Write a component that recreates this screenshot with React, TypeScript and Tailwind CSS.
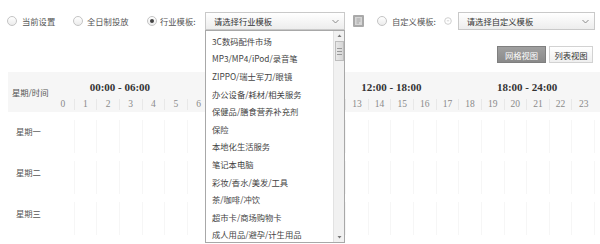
import React from 'react';

const hours = Array.from({ length: 24 }, (_, i) => i);
const days = ['星期一', '星期二', '星期三'];
const industries = [
  '3C数码配件市场',
  'MP3/MP4/iPod/录音笔',
  'ZIPPO/瑞士军刀/眼镜',
  '办公设备/耗材/相关服务',
  '保健品/膳食营养补充剂',
  '保险',
  '本地化生活服务',
  '笔记本电脑',
  '彩妆/香水/美发/工具',
  '茶/咖啡/冲饮',
  '超市卡/商场购物卡',
  '成人用品/避孕/计生用品',
];
const ranges = ['00:00 - 06:00', '06:00 - 12:00', '12:00 - 18:00', '18:00 - 24:00'];

// hours and range covered by the open dropdown
const hiddenHour = (h: number) => h >= 7 && h <= 12;

const Radio: React.FC<{ checked?: boolean }> = ({ checked }) => (
  <span className="w-[10px] h-[10px] shrink-0 rounded-full border border-[#c4c4c4] bg-gradient-to-b from-white to-[#ececec] flex items-center justify-center">
    {checked && <span className="w-[4px] h-[4px] rounded-full bg-[#444]" />}
  </span>
);

const Arrow = () => (
  <svg width="7" height="5" viewBox="0 0 7 5">
    <path d="M0.5 1 L3.5 4 L6.5 1" fill="none" stroke="#8a8a8a" strokeWidth="1" />
  </svg>
);

const Select: React.FC<{ label: string; width: string }> = ({ label, width }) => (
  <div className={`${width} h-[18px] shrink-0 border border-[#c9c9c9] bg-gradient-to-b from-white to-[#ededed] flex items-center justify-between pl-[8px] pr-[5px] text-[#333]`}>
    <span>{label}</span>
    <Arrow />
  </div>
);

export default function App() {
  return (
    <div className="relative w-[600px] h-[244px] overflow-hidden bg-white text-[#555] text-[8.3px] leading-[12px] font-['Noto_Sans_CJK_SC',sans-serif]">
      {/* filter bar */}
      <div className="h-[41px] pt-[12px] flex items-start">
        <div className="h-[18px] flex items-center w-[73px] pl-[7px] gap-[5px]">
          <Radio />
          <span>当前设置</span>
        </div>
        <div className="h-[18px] flex items-center w-[74px] gap-[4px]">
          <Radio />
          <span>全日制投放</span>
        </div>
        <div className="h-[18px] flex items-center w-[58px] gap-[3px]">
          <Radio checked />
          <span>行业模板:</span>
        </div>
        <Select label="请选择行业模板" width="w-[140px]" />
        <div className="h-[18px] flex items-center ml-[8px]">
          <svg width="11" height="12" viewBox="0 0 11 12">
            <rect x="0" y="0" width="11" height="12" rx="1" fill="#a9a9a9" />
            <rect x="2" y="2" width="7" height="8" fill="#d6d6d6" />
            <path d="M3.5 4 H7.5 M3.5 6 H7.5 M3.5 8 H6" stroke="#9a9a9a" strokeWidth="0.8" />
          </svg>
        </div>
        <div className="h-[18px] flex items-center ml-[13px] gap-[5px]">
          <Radio />
          <span>自定义模板:</span>
          <svg width="8" height="8" viewBox="0 0 8 8" className="ml-[3px]">
            <circle cx="4" cy="4" r="3.3" fill="none" stroke="#cfcfcf" strokeWidth="1" />
            <path d="M2.8 3.8 H5.2" stroke="#d4d4d4" strokeWidth="1" />
          </svg>
        </div>
        <div className="ml-[6px]">
          <Select label="请选择自定义模板" width="w-[137px]" />
        </div>
      </div>

      {/* view switch */}
      <div className="h-[31px] flex justify-end items-start pt-[5px] pr-[7px] gap-[3px]">
        <button className="w-[49px] h-[17px] bg-gradient-to-b from-[#a0a0a0] to-[#8a8a8a] border border-[#7f7f7f] text-white text-[8.3px] leading-[12px]">
          网格视图
        </button>
        <button className="w-[44px] h-[17px] bg-gradient-to-b from-white to-[#efefef] border border-[#d2d2d2] text-[#333] text-[8.3px] leading-[12px]">
          列表视图
        </button>
      </div>

      {/* schedule table */}
      <div className="ml-[8px]">
        <div className="h-[40px] bg-[#f6f6f6] flex">
          <div className="w-[44px] pl-[4px] pt-[14px] text-[#555]">星期/时间</div>
          <div className="w-[543px] flex flex-col">
            <div className="h-[24px] grid grid-cols-4 items-end pb-[2px]">
              {ranges.map((r, i) => (
                <div
                  key={r}
                  className={`text-center font-['Liberation_Serif',serif] font-bold text-[11px] leading-[13px] text-[#333] ${i === 1 ? 'invisible' : ''}`}
                >
                  {r}
                </div>
              ))}
            </div>
            <div className="h-[16px] grid grid-cols-[repeat(24,minmax(0,1fr))] items-center">
              {hours.map((h) => (
                <div
                  key={h}
                  className="text-center font-['Liberation_Serif',serif] text-[9.5px] leading-[11px] text-[#8a8a8a] border-r border-[#e8e8e8] last:border-r-0"
                >
                  <span className={hiddenHour(h) ? 'invisible' : ''}>{h}</span>
                </div>
              ))}
            </div>
          </div>
        </div>

        {days.map((d) => (
          <div key={d} className="h-[41px] flex">
            <div className="w-[44px] pl-[8px] pt-[13px] text-[#555]">{d}</div>
            <div className="w-[543px] grid grid-cols-[repeat(24,minmax(0,1fr))]">
              {hours.map((h) => (
                <div key={h} className="mt-[8px] border-r border-[#f6f6f6]" />
              ))}
            </div>
          </div>
        ))}
      </div>

      {/* open industry dropdown */}
      <div className="absolute left-[205px] top-[30px] w-[140px] h-[213px] border border-[#a8a8a8] bg-white flex">
        <ul className="flex-1 pt-[1px]">
          {industries.map((it) => (
            <li key={it} className="h-[17.6px] flex items-center pl-[6px] text-[#444] whitespace-nowrap">
              {it}
            </li>
          ))}
        </ul>
        <div className="w-[11px] bg-[#f1f1f1] border-l border-[#e2e2e2] flex flex-col items-center">
          <svg width="11" height="10" viewBox="0 0 11 10" className="shrink-0">
            <path d="M3.5 6 L5.5 3.5 L7.5 6 Z" fill="#777" />
          </svg>
          <div className="w-[9px] h-[20px] bg-gradient-to-r from-[#e8e8e8] to-[#d6d6d6] border border-[#bdbdbd] flex flex-col items-center justify-center gap-[2px]">
            <span className="w-[5px] h-px bg-[#999]" />
            <span className="w-[5px] h-px bg-[#999]" />
            <span className="w-[5px] h-px bg-[#999]" />
          </div>
          <div className="flex-1" />
          <svg width="11" height="10" viewBox="0 0 11 10" className="shrink-0">
            <path d="M3.5 4 L5.5 6.5 L7.5 4 Z" fill="#777" />
          </svg>
        </div>
      </div>
    </div>
  );
}
